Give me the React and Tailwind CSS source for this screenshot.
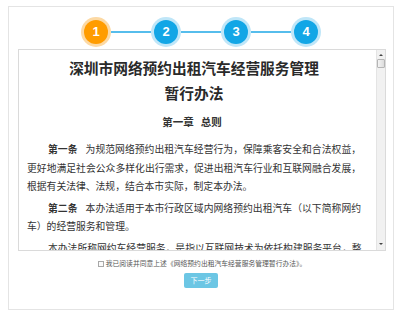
import React from 'react'

const cjk = { fontFamily: '"Noto Sans CJK SC", "Liberation Sans", sans-serif' }

function Step({ n, active }) {
  return (
    <div
      className={`w-[30px] h-[30px] rounded-full flex items-center justify-center ${
        active ? 'bg-[#fcd9a4]' : 'bg-[#bfe6f8]'
      }`}
    >
      <div
        className={`w-[24px] h-[24px] rounded-full flex items-center justify-center text-white text-[13px] font-bold ${
          active ? 'bg-[#ff9c00]' : 'bg-[#12a6e6]'
        }`}
        style={{ fontFamily: '"Liberation Sans", Arial, sans-serif' }}
      >
        {n}
      </div>
    </div>
  )
}

function Line({ children, full, indent }) {
  return (
    <div
      className={`whitespace-nowrap ${full ? 'text-justify [text-align-last:justify]' : ''} ${
        indent ? 'pl-[21px]' : ''
      }`}
    >
      {children}
    </div>
  )
}

function Scrollbar() {
  return (
    <div className="w-[9px] shrink-0 bg-[#f1f1f1] border-l border-[#e4e4e4] flex flex-col items-center justify-between py-[2px]">
      <div className="flex flex-col items-center w-full">
        <div className="w-0 h-0 mt-[2px] border-l-[2px] border-r-[2px] border-b-[2px] border-l-transparent border-r-transparent border-b-[#444]" />
        <div className="w-[8px] h-[9px] mt-[3px] border border-[#b5b5b5] bg-gradient-to-r from-[#f4f4f4] to-[#dcdcdc] rounded-[1px]" />
      </div>
      <div className="w-0 h-0 mb-[3px] border-l-[2px] border-r-[2px] border-t-[2px] border-l-transparent border-r-transparent border-t-[#444]" />
    </div>
  )
}

export default function App() {
  return (
    <div className="w-[400px] h-[315px] bg-white pt-[6px] pl-[8px]" style={cjk}>
      <div className="w-[386px] h-[304px] border border-[#e4e4e4] bg-white flex flex-col items-center">
        {/* steps */}
        <div className="mt-[10px] flex items-center">
          <Step n="1" active />
          <div className="w-[40px] h-[2px] bg-[#56bdec]" />
          <Step n="2" />
          <div className="w-[40px] h-[2px] bg-[#56bdec]" />
          <Step n="3" />
          <div className="w-[40px] h-[2px] bg-[#56bdec]" />
          <Step n="4" />
        </div>

        {/* agreement text */}
        <div className="mt-[2px] w-[368px] h-[202px] border border-[#dadada] flex self-start ml-[9px]">
          <div className="flex-1 overflow-hidden pl-[8px] pr-[15px] pt-[5px] text-[#333]">
            <div className="text-center text-[14.7px] leading-[25px] font-bold text-[#2a2a2a]">
              深圳市网络预约出租汽车经营服务管理
              <br />
              暂行办法
            </div>
            <div className="mt-[8px] text-center text-[10.5px] leading-[18px] font-bold text-[#333] pr-[4px]">
              第一章<span className="inline-block w-[7px]" />总则
            </div>
            <div className="mt-[9px] text-[9.8px] leading-[18.5px]">
              <div className="mb-[3px]">
                <Line full indent>
                  <span className="font-bold">第一条</span>
                  <span className="inline-block w-[8px]" />
                  为规范网络预约出租汽车经营行为，保障乘客安全和合法权益，
                </Line>
                <Line full>更好地满足社会公众多样化出行需求，促进出租汽车行业和互联网融合发展，</Line>
                <Line>根据有关法律、法规，结合本市实际，制定本办法。</Line>
              </div>
              <div className="mb-[3px]">
                <Line full indent>
                  <span className="font-bold">第二条</span>
                  <span className="inline-block w-[8px]" />
                  本办法适用于本市行政区域内网络预约出租汽车（以下简称网约
                </Line>
                <Line>车）的经营服务和管理。</Line>
              </div>
              <div>
                <Line full indent>本办法所称网约车经营服务，是指以互联网技术为依托构建服务平台，整</Line>
              </div>
            </div>
          </div>
          <Scrollbar />
        </div>

        {/* consent */}
        <label className="mt-[7px] h-[11px] leading-[11px] flex items-center text-[6.8px] text-[#555] pl-[2px]">
          <span className="w-[6px] h-[6px] border border-[#a8a8a8] bg-[#fafafa] mr-[2px]" />
          <span>我已阅读并同意上述《网络预约出租汽车经营服务管理暂行办法》。</span>
        </label>

        <button className="mt-[4px] w-[34px] h-[15px] rounded-[2px] bg-[#6cc6e4] text-white text-[7px] leading-[15px]">
          下一步
        </button>
      </div>
    </div>
  )
}
